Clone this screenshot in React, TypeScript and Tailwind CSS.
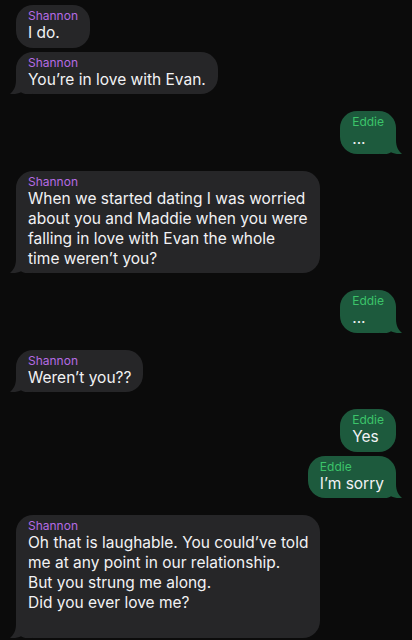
type Msg = { from: 'Shannon' | 'Eddie'; lines: string[]; tail?: boolean; gap: string };

const messages: Msg[] = [
  { from: 'Shannon', lines: ['I do.'], gap: 'mt-[5px]' },
  { from: 'Shannon', lines: ['You’re in love with Evan.'], tail: true, gap: 'mt-[4px]' },
  { from: 'Eddie', lines: ['...'], tail: true, gap: 'mt-[17px]' },
  {
    from: 'Shannon',
    lines: [
      'When we started dating I was worried',
      'about you and Maddie when you were',
      'falling in love with Evan the whole',
      'time weren’t you?',
    ],
    tail: true,
    gap: 'mt-[17px]',
  },
  { from: 'Eddie', lines: ['...'], tail: true, gap: 'mt-[17px]' },
  { from: 'Shannon', lines: ['Weren’t you??'], tail: true, gap: 'mt-[17px]' },
  { from: 'Eddie', lines: ['Yes'], gap: 'mt-[17px]' },
  { from: 'Eddie', lines: ['I’m sorry'], tail: true, gap: 'mt-[4px]' },
  {
    from: 'Shannon',
    lines: [
      'Oh that is laughable. You could’ve told',
      'me at any point in our relationship.',
      'But you strung me along.',
      'Did you ever love me?',
      '\u00a0',
    ],
    tail: true,
    gap: 'mt-[17px]',
  },
];

function Tail({ color, right }: { color: string; right?: boolean }) {
  return (
    <svg
      width="22"
      height="20"
      viewBox="0 0 22 20"
      className={right ? 'absolute bottom-0 right-[-6px] -scale-x-100' : 'absolute bottom-0 left-[-6px]'}
    >
      <path
        d="M6 0 L22 0 L22 20 L17 20 C14.5 20 12.5 19.3 11 18.2 C8 19.8 4 20.3 0 19.8 C3.5 17 6 13 6 6 Z"
        fill={color}
      />
    </svg>
  );
}

function Bubble({ m }: { m: Msg }) {
  const mine = m.from === 'Eddie';
  const bg = mine ? '#1d5a3d' : '#262628';
  return (
    <div className={`flex ${mine ? 'justify-end pr-4' : 'justify-start pl-4'} ${m.gap}`}>
      <div
        className={`relative rounded-[17px] px-3 pt-[4px] pb-[4.5px] ${mine ? 'bg-[#1d5a3d]' : 'bg-[#262628]'}`}
      >
        {m.tail && <Tail color={bg} right={mine} />}
        <div className="relative">
          <div
            className={`text-[12px] leading-[14px] ${mine ? 'text-[#3cc46a]' : 'text-[#b56be3]'}`}
          >
            {m.from}
          </div>
          {m.lines.map((l, i) => (
            <div key={i} className="whitespace-nowrap text-[15.5px] leading-[20px] text-[#f2f2f4]">
              {l}
            </div>
          ))}
        </div>
      </div>
    </div>
  );
}

export default function App() {
  return (
    <div
      className="h-[640px] w-[412px] overflow-hidden bg-[#0b0b0b]"
      style={{ fontFamily: 'Inter, "Noto Sans", sans-serif' }}
    >
      {messages.map((m, i) => (
        <Bubble key={i} m={m} />
      ))}
    </div>
  );
}
